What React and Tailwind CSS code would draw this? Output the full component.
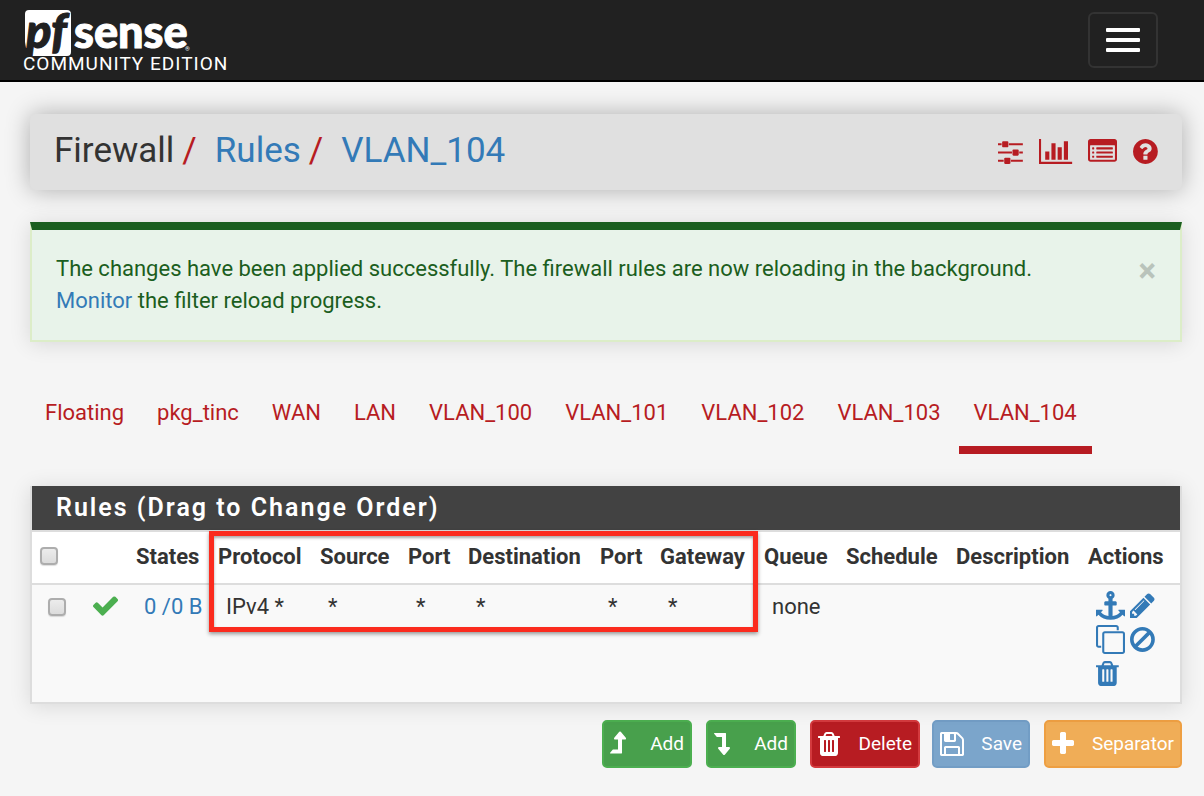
import React from "react";

const BULLET = "v64q0 13-9.5 22.5t-22.5 9.5h-64q-13 0-22.5-9.5t-9.5-22.5v-64q0-13 9.5-22.5t22.5-9.5h64q13 0 22.5 9.5t9.5 22.5z";
const LINE = "v64q0 13-9.5 22.5t-22.5 9.5h-960q-13 0-22.5-9.5t-9.5-22.5v-64q0-13 9.5-22.5t22.5-9.5h960q13 0 22.5 9.5t9.5 22.5z";
const SLOT = "v-704q0-14-9-23t-23-9h-64q-14 0-23 9t-9 23v704q0 14 9 23t23 9h64q14 0 23-9t9-23z";

// Each entry: viewBox, then path.
const ICONS = {
  sliders: ["128 0 1536 1792", "M480 1408v128h-352v-128h352zm352-128q26 0 45 19t19 45v256q0 26-19 45t-45 19h-256q-26 0-45-19t-19-45v-256q0-26 19-45t45-19h256zm160-384v128h-864v-128h864zm-640-512v128h-224v-128h224zm1312 1024v128h-736v-128h736zm-960-1152q26 0 45 19t19 45v256q0 26-19 45t-45 19h-256q-26 0-45-19t-19-45v-256q0-26 19-45t45-19h256zm640 512q26 0 45 19t19 45v256q0 26-19 45t-45 19h-256q-26 0-45-19t-19-45v-256q0-26 19-45t45-19h256zm320 128v128h-224v-128h224zm0-512v128h-864v-128h864z"],
  chart: ["0 0 2048 1792", "M640 896v512h-256v-512h256zm384-512v1024h-256v-1024h256zm1024 1152v128h-2048v-1536h128v1408h1920zm-640-896v768h-256v-768h256zm384-384v1152h-256v-1152h256z"],
  list: ["0 0 1792 1792", "M384 1184" + BULLET + "M384 928" + BULLET + "M384 672" + BULLET + "M1536 1184" + LINE + "M1536 928" + LINE + "M1536 672" + LINE + "M1664 1376v-832q0-13-9.5-22.5t-22.5-9.5h-1472q-13 0-22.5 9.5t-9.5 22.5v832q0 13 9.5 22.5t22.5 9.5h1472q13 0 22.5-9.5t9.5-22.5zm128-1088v1088q0 66-47 113t-113 47h-1472q-66 0-113-47t-47-113v-1088q0-66 47-113t113-47h1472q66 0 113 47t47 113z"],
  help: ["128 0 1536 1792", "M1024 1376v-192q0-14-9-23t-23-9h-192q-14 0-23 9t-9 23v192q0 14 9 23t23 9h192q14 0 23-9t9-23zm256-672q0-88-55.5-163t-138.5-116-170-41q-243 0-371 213-15 24 8 42l132 100q7 6 19 6 16 0 25-12 53-68 86-92 34-24 86-24 48 0 85.5 26t37.5 59q0 38-20 61t-68 45q-63 28-115.5 86.5t-52.5 125.5v36q0 14 9 23t23 9h192q14 0 23-9t9-23q0-19 21.5-49.5t54.5-49.5q32-18 49-28.5t46-35 44.5-48 28-60.5 12.5-81zm384 192q0 209-103 385.5t-279.5 279.5-385.5 103-385.5-103-279.5-279.5-103-385.5 103-385.5 279.5-279.5 385.5-103 385.5 103 279.5 279.5 103 385.5z"],
  check: ["0 0 1792 1792", "M1671 566q0 40-28 68l-724 724-136 136q-28 28-68 28t-68-28l-136-136-362-362q-28-28-28-68t28-68l136-136q28-28 68-28t68 28l294 295 656-657q28-28 68-28t68 28l136 136q28 28 28 68z"],
  anchor: ["0 0 1792 1792", "M960 256q0-26-19-45t-45-19-45 19-19 45 19 45 45 19 45-19 19-45zm832 928v352q0 22-20 30-8 2-12 2-12 0-23-9l-93-93q-119 143-318.5 226.5t-429.5 83.5-429.5-83.5-318.5-226.5l-93 93q-9 9-23 9-4 0-12-2-20-8-20-30v-352q0-14 9-23t23-9h352q22 0 30 20 8 19-7 35l-100 100q67 91 189.5 153.5t271.5 82.5v-647h-192q-26 0-45-19t-19-45v-128q0-26 19-45t45-19h192v-163q-58-34-93-92.5t-35-128.5q0-106 75-181t181-75 181 75 75 181q0 70-35 128.5t-93 92.5v163h192q26 0 45 19t19 45v128q0 26-19 45t-45 19h-192v647q149-20 271.5-82.5t189.5-153.5l-100-100q-15-16-7-35 8-20 30-20h352q14 0 23 9t9 23z"],
  pencil: ["128 0 1536 1792", "M491 1536l91-91-235-235-91 91v107h128v128h107zm523-928q0-22-22-22-10 0-17 7l-542 542q-7 7-7 17 0 22 22 22 10 0 17-7l542-542q7-7 7-17zm-54-192l416 416-832 832h-416v-416zm683 96q0 53-37 90l-166 166-416-416 166-165q36-38 90-38 53 0 91 38l235 234q37 39 37 91z"],
  clone: ["0 0 1792 1792", "M1664 1632v-1088q0-13-9.5-22.5t-22.5-9.5h-1088q-13 0-22.5 9.5t-9.5 22.5v1088q0 13 9.5 22.5t22.5 9.5h1088q13 0 22.5-9.5t9.5-22.5zm128-1088v1088q0 66-47 113t-113 47h-1088q-66 0-113-47t-47-113v-1088q0-66 47-113t113-47h1088q66 0 113 47t47 113zm-384-384v160h-128v-160q0-13-9.5-22.5t-22.5-9.5h-1088q-13 0-22.5 9.5t-9.5 22.5v1088q0 13 9.5 22.5t22.5 9.5h160v128h-160q-66 0-113-47t-47-113v-1088q0-66 47-113t113-47h1088q66 0 113 47t47 113z"],
  ban: ["128 0 1536 1792", "M1440 893q0-161-87-295l-754 753q137 89 297 89 111 0 211.5-43.5t173.5-116.5 116-174.5 43-212.5zm-999 299l755-754q-135-91-300-91-148 0-273 73t-198 199-73 274q0 162 89 299zm1223-299q0 157-61 300t-163.5 246-245 164-298.5 61-298.5-61-245-164-163.5-246-61-300 61-299.5 163.5-245.5 245-164 298.5-61 298.5 61 245 164 163.5 245.5 61 299.5z"],
  trash: ["192 0 1408 1792", "M704 1376" + SLOT + "M960 1376" + SLOT + "M1216 1376" + SLOT + "M672 384h448l-48-117q-7-9-17-11h-317q-10 2-17 11zm928 32v64q0 14-9 23t-23 9h-96v948q0 83-47 143.5t-113 60.5h-832q-66 0-113-58.5t-47-141.5v-952h-96q-14 0-23-9t-9-23v-64q0-14 9-23t23-9h309l70-167q15-37 54-63t79-26h320q40 0 79 26t54 63l70 167h309q14 0 23 9t9 23z"],
  up: ["314 0 1024 1792", "M1333 571q-17 37-58 37h-192v864q0 14-9 23t-23 9h-704q-21 0-29-18-8-20 4-35l160-192q9-11 25-11h320v-640h-192q-40 0-58-37-17-37 9-68l320-384q18-22 49-22t49 22l320 384q27 32 9 68z"],
  down: ["314 0 1024 1792", "M347 192h704q13 0 22.5 9.5t9.5 23.5v863h192q40 0 58 37t-9 69l-320 384q-18 22-49 22t-49-22l-320-384q-26-31-9-69 18-37 58-37h192v-640h-320q-14 0-25-11l-160-192q-13-14-4-34 9-19 29-19z"],
  save: ["128 0 1536 1792", "M512 1536h768v-384h-768v384zm896 0h128v-896q0-14-10-38.5t-20-34.5l-281-281q-10-10-34-20t-39-10v416q0 40-28 68t-68 28h-576q-40 0-68-28t-28-68v-416h-128v1280h128v-416q0-40 28-68t68-28h832q40 0 68 28t28 68v416zm-384-928v-320q0-13-9.5-22.5t-22.5-9.5h-192q-13 0-22.5 9.5t-9.5 22.5v320q0 13 9.5 22.5t22.5 9.5h192q13 0 22.5-9.5t9.5-22.5zm640 32v928q0 40-28 68t-68 28h-1344q-40 0-68-28t-28-68v-1344q0-40 28-68t68-28h928q40 0 88 20t76 48l280 280q28 28 48 76t20 88z"],
  plus: ["192 0 1408 1792", "M1600 736v192q0 40-28 68t-68 28h-416v416q0 40-28 68t-68 28h-192q-40 0-68-28t-28-68v-416h-416q-40 0-68-28t-28-68v-192q0-40 28-68t68-28h416v-416q0-40 28-68t68-28h192q40 0 68 28t28 68v416h416q40 0 68 28t28 68z"],
};

function Icon({ name, className = "h-[29px]" }) {
  const [viewBox, d] = ICONS[name];
  return (
    <svg viewBox={viewBox} fill="currentColor" aria-hidden="true" className={"block w-auto shrink-0 overflow-visible " + className}>
      <path d={d} />
    </svg>
  );
}

function Logo() {
  return (
    <svg viewBox="0 0 168 48" role="img" aria-label="pfSense" className="block h-12 w-[168px] overflow-visible">
      <path d="M6 0H44a4 4 0 0 1 4 4V42a4 4 0 0 1-4 4H7L9 37 3 38 2 32V4a4 4 0 0 1 4-4z" fill="#fff" />
      <text x="3" y="38" fontFamily="Lato, sans-serif" fontWeight="900" fontStyle="italic" fontSize="47" fill="#212121" stroke="#212121">pf</text>
      <text x="51" y="38" fontFamily="Lato, sans-serif" fontWeight="900" fontSize="45" fill="#fff" stroke="#fff">sense</text>
      <text x="162" y="41" fontFamily="Roboto, sans-serif" fontSize="6" fill="#fff">®</text>
    </svg>
  );
}

const TABS = ["Floating", "pkg_tinc", "WAN", "LAN", "VLAN_100", "VLAN_101", "VLAN_102", "VLAN_103", "VLAN_104"];

const COLUMNS = [
  ["States", "w-[82px]"],
  ["Protocol", "w-[102px]"],
  ["Source", "w-[88px]"],
  ["Port", "w-[60px]"],
  ["Destination", "w-[132px]"],
  ["Port", "w-[60px]"],
  ["Gateway", "w-[104px]"],
  ["Queue", "w-[82px]"],
  ["Schedule", "w-[110px]"],
  ["Description", "w-[132px]"],
  ["Actions", "w-[100px]"],
];

const CELLS = ["IPv4 *", "*", "*", "*", "*", "*", "none", "", ""];

const TOOLS = [
  ["sliders", "Settings"],
  ["chart", "Status graph"],
  ["list", "Log"],
  ["help", "Help"],
];

const ACTIONS = [
  ["anchor", "Move"],
  ["pencil", "Edit"],
  ["clone", "Copy"],
  ["ban", "Disable"],
  ["trash", "Delete rule"],
];

const RULE_BUTTONS = [
  ["up", "Add", "w-[90px] bg-[#48a04c] border-[#4caf50]"],
  ["down", "Add", "w-[90px] bg-[#48a04c] border-[#4caf50]"],
  ["trash", "Delete", "w-[110px] bg-[#b71c22] border-[#d33a3e]"],
];

const PAGE_BUTTONS = [
  ["save", "Save", "w-[98px] bg-[#7ba5cb] border-[#729dc5]"],
  ["plus", "Separator", "w-[138px] bg-[#f0ad57] border-[#ee9f42]"],
];

function ButtonGroup({ buttons }) {
  return (
    <div className="flex gap-[14px]">
      {buttons.map(([icon, label, style]) => (
        <button key={icon} type="button" className={"flex h-12 items-center justify-between rounded-[5px] border-2 px-[6px] text-[19px] leading-6 text-white " + style}>
          <Icon name={icon} className="h-7" />
          {label}
        </button>
      ))}
    </div>
  );
}

const CHECKBOX = "block size-[18px] appearance-none rounded-[4px] border-2 border-[#adadad] bg-linear-to-b from-[#ececec] to-[#dcdcdc] shadow-[0_1px_1px_#0002] checked:bg-[#337ab7]";

export default function App() {
  return (
    <div className="min-h-screen bg-[#f5f5f5] font-[Roboto,sans-serif] text-[22px] leading-8 text-[#212121]">
      <header className="flex items-start justify-between border-b-2 border-black bg-[#212121] pb-1 pl-[23px] pr-[46px] pt-[10px]">
        <a href="#home" className="flex flex-col text-white">
          <Logo />
          <span className="-mt-1 text-[19px] leading-5 tracking-[1px]">COMMUNITY EDITION</span>
        </a>
        <button type="button" aria-label="Toggle navigation" className="mb-2 mt-[2px] flex h-14 w-[70px] flex-col items-center justify-center gap-[6px] rounded-md border-2 border-[#333]">
          <span className="h-1 w-[34px] rounded-[1px] bg-white" />
          <span className="h-1 w-[34px] rounded-[1px] bg-white" />
          <span className="h-1 w-[34px] rounded-[1px] bg-white" />
        </button>
      </header>

      <main className="pl-[30px] pr-[22px] pt-8">
        <div className="flex h-[76px] items-center justify-between rounded-md bg-[#e0e0e0] pl-6 pr-6 shadow-[0_0_24px_#0000004d]">
          <h1 className="pb-[2px] text-[35px] leading-10 text-[#333]">
            <ol className="flex">
              <li>Firewall<span className="pl-2 pr-[18px] text-[#b71c22]">/</span></li>
              <li><a href="#rules" className="text-[#337ab7]">Rules</a><span className="pl-2 pr-[18px] text-[#b71c22]">/</span></li>
              <li><a href="#vlan104" className="text-[#337ab7]">VLAN_104</a></li>
            </ol>
          </h1>
          <nav aria-label="Page tools" className="flex items-center gap-4 pb-[2px] text-[#b71c22]">
            {TOOLS.map(([icon, label]) => (
              <a key={icon} href={"#" + icon} aria-label={label}><Icon name={icon} /></a>
            ))}
          </nav>
        </div>

        <div role="alert" className="mt-8 flex items-start justify-between border-2 border-t-8 border-[#dcedc8] border-t-[#1b5e20] bg-[#e8f3ea] px-6 py-[23px] text-[#1b5e20] shadow-[0_2px_20px_#0000001f]">
          <p>
            The changes have been applied successfully. The firewall rules are now reloading in the background.
            <br />
            <a href="#monitor" className="text-[#337ab7]">Monitor</a> the filter reload progress.
          </p>
          <button type="button" aria-label="Close" className="text-[33px] font-bold leading-9 text-[#b9c3bb]">×</button>
        </div>

        <nav aria-label="Interfaces" className="mt-[46px] flex gap-[3px]">
          {TABS.map((tab) => (
            <a
              key={tab}
              href={"#" + tab}
              aria-current={tab === "VLAN_104" ? "page" : undefined}
              className={"border-b-8 px-[15px] pb-[17px] pt-[9px] text-[#b71c22] " + (tab === "VLAN_104" ? "border-[#b71c22]" : "border-transparent")}
            >
              {tab}
            </a>
          ))}
        </nav>

        <section className="relative mt-8 border-x-2 border-b-2 border-[#ddd] bg-[#f9f9f9] shadow-[0_2px_20px_#0000001f]">
          <h2 className="bg-[#424242] px-6 py-[6px] text-[25px] font-semibold tracking-[2px] text-white">Rules (Drag to Change Order)</h2>
          <table className="w-full table-fixed border-collapse text-left text-[#333]">
            <thead>
              <tr className="h-[53px] border-y-2 border-[#ddd] bg-white">
                <th className="w-[54px] pb-1 pl-2"><input type="checkbox" aria-label="Select all rules" className={CHECKBOX} /></th>
                <th className="w-[42px]" aria-label="Status" />
                {COLUMNS.map(([label, width], i) => (
                  <th key={i} className={"whitespace-nowrap pb-[2px] pl-2 font-bold " + width}>{label}</th>
                ))}
              </tr>
            </thead>
            <tbody>
              <tr className="h-[118px] align-top">
                <td className="pl-4 pt-[13px]"><input type="checkbox" aria-label="Select rule" className={CHECKBOX} /></td>
                <td className="pl-[5px] pt-[6px] text-[#4caf50]"><Icon name="check" /></td>
                <td className="whitespace-nowrap pl-4 pt-[6px]"><a href="#states" className="text-[#337ab7]">0 /0 B</a></td>
                {CELLS.map((cell, i) => (
                  <td key={i} className="whitespace-nowrap pl-4 pt-[6px]">{cell}</td>
                ))}
                <td className="pl-4 pt-[6px]">
                  <div className="flex flex-wrap gap-x-[5px] gap-y-[5px] text-[#337ab7]">
                    {ACTIONS.map(([icon, label]) => (
                      <a key={icon} href={"#" + icon} aria-label={label}><Icon name={icon} /></a>
                    ))}
                  </div>
                </td>
              </tr>
            </tbody>
          </table>
          <div className="pointer-events-none absolute left-[177px] top-[45px] h-[101px] w-[549px] border-[5px] border-[#fb2b1e] shadow-[0_2px_4px_#0006,inset_0_2px_3px_#0005]" />
        </section>

        <div className="flex flex-wrap justify-end gap-3 pb-7 pt-4">
          <ButtonGroup buttons={RULE_BUTTONS} />
          <ButtonGroup buttons={PAGE_BUTTONS} />
        </div>
      </main>
    </div>
  );
}
